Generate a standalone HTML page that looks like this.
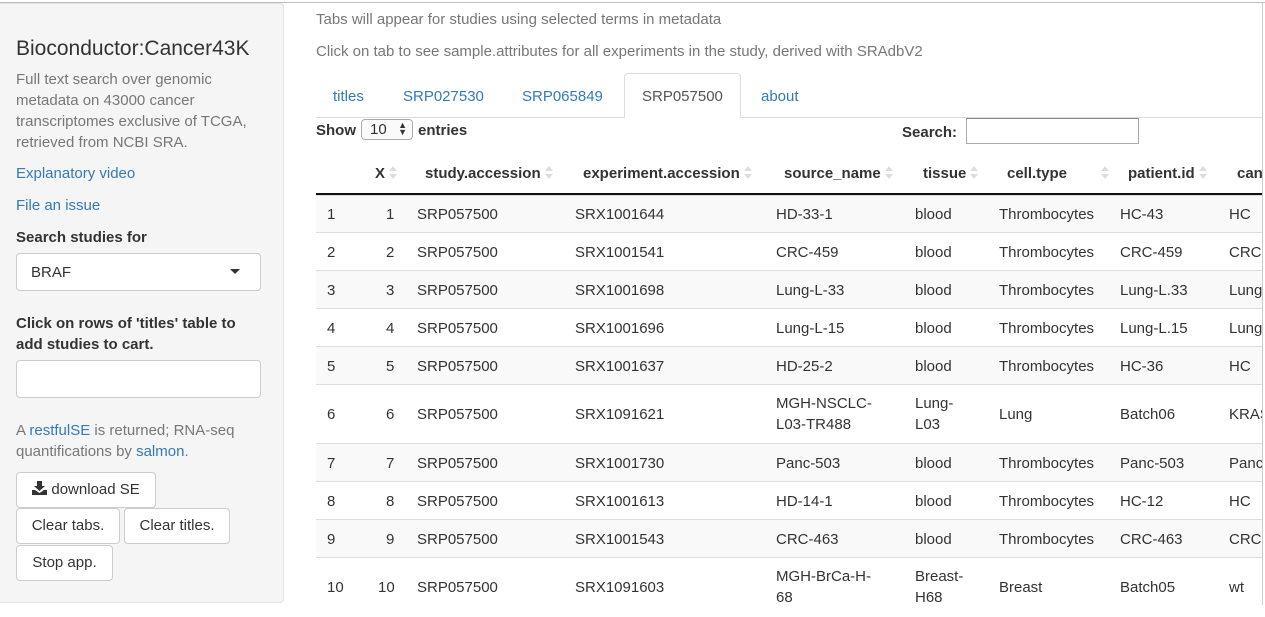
<!DOCTYPE html>
<html><head><style>
*{box-sizing:border-box;margin:0;padding:0}
body{width:1265px;height:605px;overflow:hidden;background:#fff;font-family:"Liberation Sans",sans-serif;font-size:14px;color:#333;position:relative}
.a{position:absolute;white-space:nowrap}
a,.lk{color:#337ab7;text-decoration:none}
.side{position:absolute;left:0;top:3px;width:284px;height:600px;background:#f5f5f5;border:1px solid #e3e3e3;border-left:none;border-radius:0 4px 4px 0}
.inp{position:absolute;left:16px;width:245px;height:38px;background:#fff;border:1px solid #ccc;border-radius:4px}
.btn{position:absolute;background:#fff;border:1px solid #ccc;border-radius:4px;font-size:15px;color:#333;text-align:center;line-height:34px;height:36px}
.row{position:absolute;left:316px;width:946px;border-top:1px solid #ddd;font-size:15px}
.row.o{background:#f9f9f9}
.row span{position:absolute}
.th{position:absolute;top:165px;font-weight:bold;font-size:15px}
.sort{display:inline-block;width:8px;height:14px;vertical-align:-2px;margin-left:4px;position:relative}
.sort:before{content:"";position:absolute;left:0;top:0;border:4px solid transparent;border-bottom:5px solid #ddd;border-top:0}
.sort:after{content:"";position:absolute;left:0;top:8px;border:4px solid transparent;border-top:5px solid #ddd;border-bottom:0}
.sd{font-size:15px}
</style></head><body>
<div class="a" style="left:0;top:2px;width:1265px;height:1px;background:#bbb"></div>
<div class="side"></div>
<div class="a" style="left:16px;top:37px;font-size:21px;color:#333">Bioconductor:Cancer43K</div>
<div class="a sd" style="left:16px;top:69px;line-height:21px;color:#777;white-space:normal;width:255px">Full text search over genomic metadata on 43000 cancer transcriptomes exclusive of TCGA, retrieved from NCBI SRA.</div>
<div class="a lk sd" style="left:16px;top:165px">Explanatory video</div>
<div class="a lk sd" style="left:16px;top:197px">File an issue</div>
<div class="a sd" style="left:16px;top:229px;font-weight:bold">Search studies for</div>
<div class="inp" style="top:253px"></div>
<div class="a sd" style="left:31px;top:264px">BRAF</div>
<div class="a" style="left:230px;top:269px;border:5px solid transparent;border-top:5px solid #333;border-bottom:0"></div>
<div class="a sd" style="left:16px;top:313px;font-weight:bold;line-height:21px">Click on rows of 'titles' table to<br>add studies to cart.</div>
<div class="inp" style="top:360px"></div>
<div class="a sd" style="left:16px;top:420px;line-height:21px;color:#777">A <span class="lk">restfulSE</span> is returned; RNA-seq<br>quantifications by <span class="lk">salmon</span>.</div>
<div class="btn" style="left:16px;top:472px;width:140px"><svg width="15" height="14" viewBox="0 0 15 14" style="vertical-align:-1px"><path d="M5 0h5v5h3l-5.5 5L2 5h3z M0 9h3l4.5 3 4.5-3h3v5H0z" fill="#333"/></svg> download SE</div>
<div class="btn" style="left:16px;top:508px;width:104px">Clear tabs.</div>
<div class="btn" style="left:124px;top:508px;width:106px">Clear titles.</div>
<div class="btn" style="left:16px;top:545px;width:97px">Stop app.</div>

<div class="a sd" style="left:316px;top:11px;color:#777">Tabs will appear for studies using selected terms in metadata</div>
<div class="a sd" style="left:316px;top:43px;color:#777">Click on tab to see sample.attributes for all experiments in the study, derived with SRAdbV2</div>
<div class="a" style="left:316px;top:117px;width:946px;height:1px;background:#ddd"></div>
<div class="a" style="left:624px;top:73px;width:117px;height:45px;background:#fff;border:1px solid #ddd;border-bottom:none;border-radius:4px 4px 0 0"></div>
<div class="a lk" style="left:333px;top:88px;font-size:15px">titles</div>
<div class="a lk" style="left:403px;top:88px;font-size:15px">SRP027530</div>
<div class="a lk" style="left:522px;top:88px;font-size:15px">SRP065849</div>
<div class="a" style="left:642px;top:88px;font-size:15px;color:#555">SRP057500</div>
<div class="a lk" style="left:761px;top:88px;font-size:15px">about</div>

<div class="a" style="left:316px;top:122px;font-weight:bold;font-size:15px">Show</div>
<div class="a" style="left:361px;top:119px;width:52px;height:21px;border:1px solid #aaa;border-radius:4px;background:#fafafa;font-size:15px;padding-left:8px;line-height:19px">10<span style="position:absolute;right:5px;top:2px;font-size:9px;line-height:7px">▲<br>▼</span></div>
<div class="a" style="left:418px;top:122px;font-weight:bold;font-size:15px">entries</div>
<div class="a" style="left:902px;top:124px;font-weight:bold;font-size:15px">Search:</div>
<div class="a" style="left:966px;top:118px;width:173px;height:26px;border:1px solid #aaa;border-top-color:#888;background:#fff"></div>

<div class="th" style="left:375px">X<i class="sort"></i></div>
<div class="th" style="left:425px">study.accession<i class="sort"></i></div>
<div class="th" style="left:583px">experiment.accession<i class="sort"></i></div>
<div class="th" style="left:784px">source_name<i class="sort"></i></div>
<div class="th" style="left:923px">tissue<i class="sort"></i></div>
<div class="th" style="left:1007px">cell.type<i class="sort" style="margin-left:34px"></i></div>
<div class="th" style="left:1128px">patient.id<i class="sort"></i></div>
<div class="th" style="left:1237px">can</div>
<div class="a" style="left:316px;top:193px;width:946px;height:2px;background:#111"></div>

<div class="row o" style="top:195px;height:38px"><span style="left:11px;top:10px">1</span><span style="left:70px;top:10px">1</span><span style="left:101px;top:10px">SRP057500</span><span style="left:259px;top:10px">SRX1001644</span><span style="left:460px;top:10px">HD-33-1</span><span style="left:599px;top:10px">blood</span><span style="left:683px;top:10px">Thrombocytes</span><span style="left:804px;top:10px">HC-43</span><span style="left:913px;top:10px">HC</span></div>
<div class="row" style="top:232px;height:38px"><span style="left:11px;top:11px">2</span><span style="left:70px;top:11px">2</span><span style="left:101px;top:11px">SRP057500</span><span style="left:259px;top:11px">SRX1001541</span><span style="left:460px;top:11px">CRC-459</span><span style="left:599px;top:11px">blood</span><span style="left:683px;top:11px">Thrombocytes</span><span style="left:804px;top:11px">CRC-459</span><span style="left:913px;top:11px">CRC,</span></div>
<div class="row o" style="top:270px;height:38px"><span style="left:11px;top:11px">3</span><span style="left:70px;top:11px">3</span><span style="left:101px;top:11px">SRP057500</span><span style="left:259px;top:11px">SRX1001698</span><span style="left:460px;top:11px">Lung-L-33</span><span style="left:599px;top:11px">blood</span><span style="left:683px;top:11px">Thrombocytes</span><span style="left:804px;top:11px">Lung-L.33</span><span style="left:913px;top:11px">Lung</span></div>
<div class="row" style="top:308px;height:38px"><span style="left:11px;top:11px">4</span><span style="left:70px;top:11px">4</span><span style="left:101px;top:11px">SRP057500</span><span style="left:259px;top:11px">SRX1001696</span><span style="left:460px;top:11px">Lung-L-15</span><span style="left:599px;top:11px">blood</span><span style="left:683px;top:11px">Thrombocytes</span><span style="left:804px;top:11px">Lung-L.15</span><span style="left:913px;top:11px">Lung</span></div>
<div class="row o" style="top:346px;height:38px"><span style="left:11px;top:11px">5</span><span style="left:70px;top:11px">5</span><span style="left:101px;top:11px">SRP057500</span><span style="left:259px;top:11px">SRX1001637</span><span style="left:460px;top:11px">HD-25-2</span><span style="left:599px;top:11px">blood</span><span style="left:683px;top:11px">Thrombocytes</span><span style="left:804px;top:11px">HC-36</span><span style="left:913px;top:11px">HC</span></div>
<div class="row" style="top:384px;height:59px;line-height:21px"><span style="left:11px;top:19px">6</span><span style="left:70px;top:19px">6</span><span style="left:101px;top:19px">SRP057500</span><span style="left:259px;top:19px">SRX1091621</span><span style="left:460px;top:8px">MGH-NSCLC-<br>L03-TR488</span><span style="left:599px;top:8px">Lung-<br>L03</span><span style="left:683px;top:19px">Lung</span><span style="left:804px;top:19px">Batch06</span><span style="left:913px;top:19px">KRAS</span></div>
<div class="row o" style="top:443px;height:38px"><span style="left:11px;top:11px">7</span><span style="left:70px;top:11px">7</span><span style="left:101px;top:11px">SRP057500</span><span style="left:259px;top:11px">SRX1001730</span><span style="left:460px;top:11px">Panc-503</span><span style="left:599px;top:11px">blood</span><span style="left:683px;top:11px">Thrombocytes</span><span style="left:804px;top:11px">Panc-503</span><span style="left:913px;top:11px">Panc</span></div>
<div class="row" style="top:481px;height:38px"><span style="left:11px;top:11px">8</span><span style="left:70px;top:11px">8</span><span style="left:101px;top:11px">SRP057500</span><span style="left:259px;top:11px">SRX1001613</span><span style="left:460px;top:11px">HD-14-1</span><span style="left:599px;top:11px">blood</span><span style="left:683px;top:11px">Thrombocytes</span><span style="left:804px;top:11px">HC-12</span><span style="left:913px;top:11px">HC</span></div>
<div class="row o" style="top:519px;height:38px"><span style="left:11px;top:11px">9</span><span style="left:70px;top:11px">9</span><span style="left:101px;top:11px">SRP057500</span><span style="left:259px;top:11px">SRX1001543</span><span style="left:460px;top:11px">CRC-463</span><span style="left:599px;top:11px">blood</span><span style="left:683px;top:11px">Thrombocytes</span><span style="left:804px;top:11px">CRC-463</span><span style="left:913px;top:11px">CRC</span></div>
<div class="row" style="top:557px;height:60px;line-height:21px"><span style="left:11px;top:19px">10</span><span style="left:62px;top:19px">10</span><span style="left:101px;top:19px">SRP057500</span><span style="left:259px;top:19px">SRX1091603</span><span style="left:460px;top:8px">MGH-BrCa-H-<br>68</span><span style="left:599px;top:8px">Breast-<br>H68</span><span style="left:683px;top:19px">Breast</span><span style="left:804px;top:19px">Batch05</span><span style="left:913px;top:19px">wt</span></div>
<div class="a" style="left:1262px;top:3px;width:3px;height:602px;background:#fff;border-left:1px solid #ccc"></div>
</body></html>
